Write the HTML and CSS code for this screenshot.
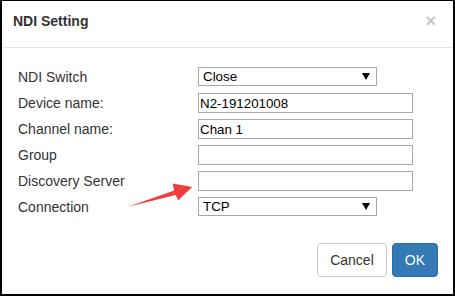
FILE: index.html
```html
<!DOCTYPE html>
<html>
<head>
<meta charset="utf-8">
<link rel="stylesheet" href="styles.css">
</head>
<body>
<div class="dialog">
  <div class="header">
    <h4 class="title">NDI Setting</h4>
    <button class="close" type="button">×</button>
  </div>
  <form class="body">
    <div class="row">
      <label class="label">NDI Switch</label>
      <select class="select"><option>Close</option><option>Open</option></select>
    </div>
    <div class="row">
      <label class="label">Device name:</label>
      <input class="input" type="text" value="N2-191201008">
    </div>
    <div class="row">
      <label class="label">Channel name:</label>
      <input class="input" type="text" value="Chan 1">
    </div>
    <div class="row">
      <label class="label">Group</label>
      <input class="input" type="text" value="">
    </div>
    <div class="row">
      <label class="label">Discovery Server</label>
      <input class="input" type="text" value="">
    </div>
    <div class="row">
      <label class="label">Connection</label>
      <select class="select"><option>TCP</option><option>UDP</option></select>
    </div>
  </form>
  <div class="footer">
    <button class="btn btn-default" type="button">Cancel</button>
    <button class="btn btn-primary" type="button">OK</button>
  </div>
  <svg class="annot" width="455" height="296" viewBox="0 0 455 296">
    <polygon points="128,206.8 174.3,190.6 172.6,183.6 192.2,186.9 178.3,200.2 175.6,195" fill="#f23b3b"/>
  </svg>
</div>
</body>
</html>
```
FILE: styles.css
```css
* { box-sizing: border-box; }
html, body {
  margin: 0;
  padding: 0;
  background: #fff;
}
body {
  width: 455px;
  height: 296px;
  overflow: hidden;
  font-family: "Liberation Sans", Arial, sans-serif;
  color: #333;
}
.dialog {
  position: relative;
  width: 455px;
  height: 296px;
  border-style: solid;
  border-color: #000;
  border-width: 1px 2px 2px 2px;
  display: flex;
  flex-direction: column;
  background: #fff;
}
.header {
  height: 47px;
  border-bottom: 1px solid #e5e5e5;
  padding: 10px 15px 0 11px;
  display: flex;
  justify-content: space-between;
  align-items: flex-start;
}
.title {
  margin: 0;
  font-size: 14px;
  font-weight: bold;
  line-height: 20px;
  color: #333;
}
.close {
  border: 0;
  background: none;
  padding: 0;
  margin: 1px 2px 0 0;
  font-family: "Liberation Sans", Arial, sans-serif;
  font-size: 18px;
  font-weight: bold;
  line-height: 18px;
  color: #c9c9c9;
}
.body {
  margin: 0;
  padding: 19px 0 0 16px;
  display: flex;
  flex-direction: column;
  gap: 6px;
}
.row {
  display: flex;
  align-items: flex-start;
  height: 20px;
}
.label {
  width: 180px;
  font-size: 14px;
  line-height: 20px;
  color: #333;
}
.input {
  width: 215px;
  height: 20px;
  margin: 0;
  padding: 0 1px;
  border: 1px solid #a9a9a9;
  border-radius: 0;
  font-family: "Liberation Sans", Arial, sans-serif;
  font-size: 13.33px;
  color: #000;
  background: #fff;
  outline: none;
}
.select {
  -webkit-appearance: none;
  appearance: none;
  width: 179px;
  height: 19px;
  margin: 0;
  padding: 0 0 0 4px;
  border: 1px solid #a9a9a9;
  border-radius: 0;
  font-family: "Liberation Sans", Arial, sans-serif;
  font-size: 13.33px;
  line-height: 17px;
  color: #000;
  background-color: #fff;
  background-image: url("data:image/svg+xml;utf8,<svg xmlns='http://www.w3.org/2000/svg' width='8' height='7'><polygon points='0,0 8,0 4,7' fill='black'/></svg>");
  background-repeat: no-repeat;
  background-position: right 6px center;
  outline: none;
}
.footer {
  margin-top: auto;
  padding: 0 15px 17px 0;
  display: flex;
  justify-content: flex-end;
  gap: 5px;
}
.btn {
  height: 34px;
  padding: 6px 12px;
  font-family: "Liberation Sans", Arial, sans-serif;
  font-size: 14px;
  line-height: 20px;
  border-radius: 4px;
  border: 1px solid transparent;
}
.btn-default {
  background: #fff;
  border-color: #ccc;
  color: #333;
}
.btn-primary {
  background: #337ab7;
  border-color: #2e6da4;
  color: #fff;
}
.annot {
  position: absolute;
  left: -2px;
  top: -1px;
  pointer-events: none;
}
```
